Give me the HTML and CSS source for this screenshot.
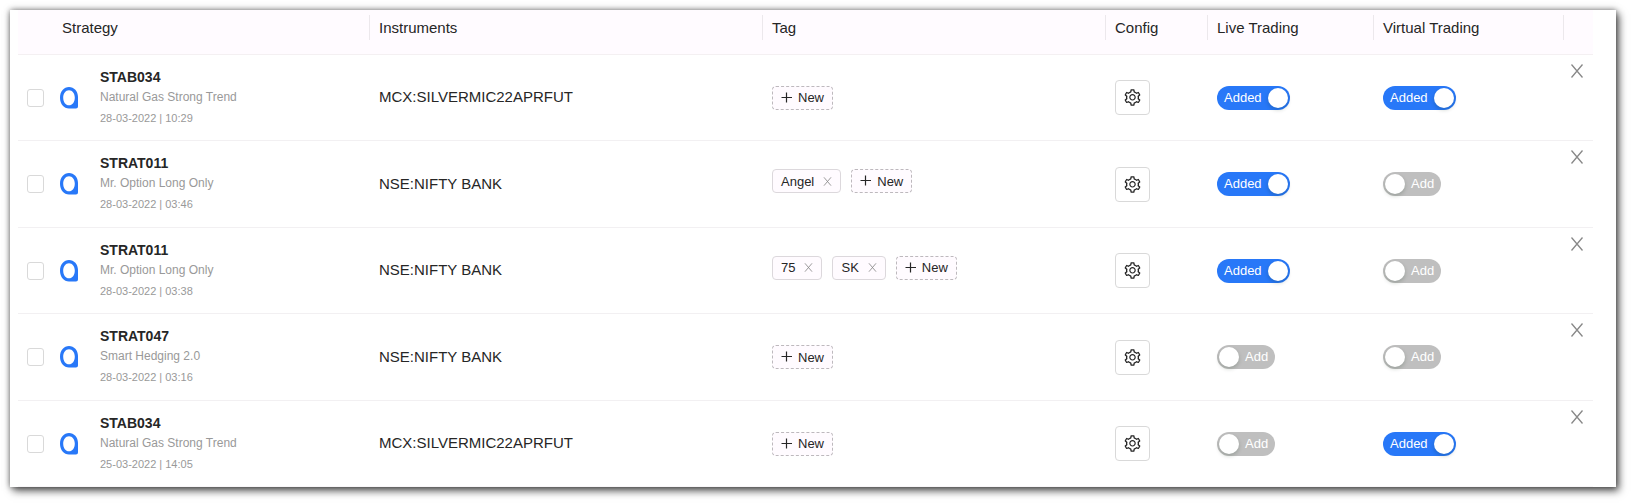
FILE: index.html
```html
<!DOCTYPE html>
<html lang="en">
<head>
<meta charset="utf-8">
<title>Strategies</title>
<link rel="stylesheet" href="styles.css">
</head>
<body>
<svg class="sprite" aria-hidden="true">
  <symbol id="logo" viewBox="0 0 18 22">
    <path fill="#2878f8" fill-rule="evenodd" d="M9 0C14 0 18 4.200 18 10V19.500Q18 21.500 16 21.500H9C4 21.500 0 17 0 10.700S4 0 9 0ZM9 3.200C5.600 3.200 3.200 6.400 3.200 10.700S5.600 18.300 9 18.300S14.800 15 14.800 10.700S12.400 3.200 9 3.200Z"/>
  </symbol>
  <symbol id="cross" viewBox="0 0 12 14">
    <path fill="none" stroke="currentColor" stroke-width="1.300" d="M.500 .500L11.500 13.500M11.500 .500L.500 13.500"/>
  </symbol>
  <symbol id="plus" viewBox="0 0 12 12">
    <path fill="none" stroke="currentColor" stroke-width="1.200" d="M5.500 .500V10.500M.500 5.500H11"/>
  </symbol>
  <symbol id="gear" viewBox="0 0 1024 1024">
    <path fill="currentColor" d="M924.800 625.700l-65.500-56c3.100-19 4.700-38.400 4.700-57.800s-1.600-38.800-4.700-57.800l65.500-56a32.030 32.030 0 0 0 9.300-35.200l-.9-2.600a443.740 443.740 0 0 0-79.700-137.900l-1.800-2.100a32.120 32.120 0 0 0-35.100-9.500l-81.300 28.900c-30-24.600-63.500-44-99.700-57.600l-15.700-85a32.050 32.050 0 0 0-25.800-25.700l-2.700-.5c-52.100-9.400-106.900-9.400-159 0l-2.700.5a32.050 32.050 0 0 0-25.800 25.700l-15.800 85.400a351.860 351.860 0 0 0-99 57.400l-81.900-29.100a32 32 0 0 0-35.100 9.500l-1.800 2.100a446.020 446.020 0 0 0-79.700 137.900l-.9 2.600c-4.500 12.500-.8 26.500 9.300 35.200l66.300 56.600c-3.100 18.800-4.600 38-4.600 57.100 0 19.200 1.500 38.400 4.600 57.100L99 625.500a32.030 32.030 0 0 0-9.300 35.200l.9 2.600c18.100 50.400 44.900 96.900 79.700 137.900l1.800 2.100a32.120 32.120 0 0 0 35.100 9.500l81.900-29.100c29.800 24.500 63.100 43.900 99 57.400l15.800 85.400a32.050 32.050 0 0 0 25.800 25.700l2.700.5a449.400 449.400 0 0 0 159 0l2.700-.5a32.050 32.050 0 0 0 25.800-25.700l15.700-85a350 350 0 0 0 99.700-57.600l81.300 28.900a32 32 0 0 0 35.100-9.500l1.800-2.100c34.800-41.100 61.600-87.500 79.700-137.900l.9-2.600c4.500-12.300.8-26.300-9.300-35zM788.300 465.900c2.500 15.100 3.800 30.600 3.800 46.100s-1.300 31-3.800 46.100l-6.600 40.100 74.700 63.900a370.030 370.030 0 0 1-42.600 73.600L721 702.800l-31.400 25.800c-23.900 19.600-50.500 35-79.300 45.800l-38.100 14.300-17.900 97a377.500 377.500 0 0 1-85 0l-17.900-97.200-37.800-14.500c-28.500-10.800-55-26.200-78.700-45.700l-31.400-25.900-93.400 33.200c-17-22.900-31.200-47.600-42.600-73.600l75.500-64.500-6.500-40c-2.400-14.900-3.700-30.300-3.700-45.500 0-15.300 1.200-30.600 3.700-45.500l6.500-40-75.500-64.500c11.300-26.100 25.600-50.700 42.600-73.600l93.400 33.200 31.400-25.900c23.700-19.500 50.200-34.900 78.700-45.700l37.900-14.300 17.900-97.200c28.100-3.200 56.800-3.200 85 0l17.900 97 38.100 14.300c28.700 10.800 55.400 26.200 79.300 45.800l31.400 25.800 92.800-32.900c17 22.900 31.200 47.600 42.600 73.600L781.800 426l6.500 39.900zM512 326c-97.200 0-176 78.800-176 176s78.800 176 176 176 176-78.800 176-176-78.800-176-176-176zm79.200 255.200A111.600 111.600 0 0 1 512 614c-29.900 0-58-11.700-79.200-32.800A111.600 111.600 0 0 1 400 502c0-29.900 11.700-58 32.800-79.200C454 401.600 482.100 390 512 390c29.900 0 58 11.600 79.200 32.800A111.600 111.600 0 0 1 624 502c0 29.900-11.700 58-32.800 79.200z"/>
  </symbol>
</svg>
<main class="card">
  <table class="strategies">
    <colgroup>
      <col class="col-check"><col class="col-strategy"><col class="col-instrument"><col class="col-tag"><col class="col-config"><col class="col-live"><col class="col-virtual"><col class="col-close">
    </colgroup>
    <thead>
      <tr>
        <th class="plain"></th>
        <th><span>Strategy</span></th>
        <th><span>Instruments</span></th>
        <th><span>Tag</span></th>
        <th><span>Config</span></th>
        <th><span>Live Trading</span></th>
        <th><span>Virtual Trading</span></th>
        <th class="plain"></th>
      </tr>
    </thead>
    <tbody>
      <tr>
        <td><input class="check" type="checkbox" aria-label="Select STAB034"></td>
        <td><div class="strategy"><svg class="logo"><use href="#logo"/></svg><div><div class="name">STAB034</div><div class="desc">Natural Gas Strong Trend</div><div class="date">28-03-2022 | 10:29</div></div></div></td>
        <td class="instrument">MCX:SILVERMIC22APRFUT</td>
        <td><div class="tags"><button class="tag new"><svg class="plus"><use href="#plus"/></svg>New</button></div></td>
        <td><button class="config" aria-label="Configure"><svg class="gear"><use href="#gear"/></svg></button></td>
        <td><label class="switch"><input type="checkbox" role="switch" checked><span>Added</span></label></td>
        <td><label class="switch"><input type="checkbox" role="switch" checked><span>Added</span></label></td>
        <td class="end"><button class="close" aria-label="Remove"><svg><use href="#cross"/></svg></button></td>
      </tr>
      <tr>
        <td><input class="check" type="checkbox" aria-label="Select STRAT011"></td>
        <td><div class="strategy"><svg class="logo"><use href="#logo"/></svg><div><div class="name">STRAT011</div><div class="desc">Mr. Option Long Only</div><div class="date">28-03-2022 | 03:46</div></div></div></td>
        <td class="instrument">NSE:NIFTY BANK</td>
        <td><div class="tags filled"><span class="tag">Angel<button class="untag" aria-label="Remove tag Angel"><svg><use href="#cross"/></svg></button></span><button class="tag new"><svg class="plus"><use href="#plus"/></svg>New</button></div></td>
        <td><button class="config" aria-label="Configure"><svg class="gear"><use href="#gear"/></svg></button></td>
        <td><label class="switch"><input type="checkbox" role="switch" checked><span>Added</span></label></td>
        <td><label class="switch"><input type="checkbox" role="switch"><span>Add</span></label></td>
        <td class="end"><button class="close" aria-label="Remove"><svg><use href="#cross"/></svg></button></td>
      </tr>
      <tr>
        <td><input class="check" type="checkbox" aria-label="Select STRAT011"></td>
        <td><div class="strategy"><svg class="logo"><use href="#logo"/></svg><div><div class="name">STRAT011</div><div class="desc">Mr. Option Long Only</div><div class="date">28-03-2022 | 03:38</div></div></div></td>
        <td class="instrument">NSE:NIFTY BANK</td>
        <td><div class="tags filled"><span class="tag">75<button class="untag" aria-label="Remove tag 75"><svg><use href="#cross"/></svg></button></span><span class="tag">SK<button class="untag" aria-label="Remove tag SK"><svg><use href="#cross"/></svg></button></span><button class="tag new"><svg class="plus"><use href="#plus"/></svg>New</button></div></td>
        <td><button class="config" aria-label="Configure"><svg class="gear"><use href="#gear"/></svg></button></td>
        <td><label class="switch"><input type="checkbox" role="switch" checked><span>Added</span></label></td>
        <td><label class="switch"><input type="checkbox" role="switch"><span>Add</span></label></td>
        <td class="end"><button class="close" aria-label="Remove"><svg><use href="#cross"/></svg></button></td>
      </tr>
      <tr>
        <td><input class="check" type="checkbox" aria-label="Select STRAT047"></td>
        <td><div class="strategy"><svg class="logo"><use href="#logo"/></svg><div><div class="name">STRAT047</div><div class="desc">Smart Hedging 2.0</div><div class="date">28-03-2022 | 03:16</div></div></div></td>
        <td class="instrument">NSE:NIFTY BANK</td>
        <td><div class="tags"><button class="tag new"><svg class="plus"><use href="#plus"/></svg>New</button></div></td>
        <td><button class="config" aria-label="Configure"><svg class="gear"><use href="#gear"/></svg></button></td>
        <td><label class="switch"><input type="checkbox" role="switch"><span>Add</span></label></td>
        <td><label class="switch"><input type="checkbox" role="switch"><span>Add</span></label></td>
        <td class="end"><button class="close" aria-label="Remove"><svg><use href="#cross"/></svg></button></td>
      </tr>
      <tr>
        <td><input class="check" type="checkbox" aria-label="Select STAB034"></td>
        <td><div class="strategy"><svg class="logo"><use href="#logo"/></svg><div><div class="name">STAB034</div><div class="desc">Natural Gas Strong Trend</div><div class="date">25-03-2022 | 14:05</div></div></div></td>
        <td class="instrument">MCX:SILVERMIC22APRFUT</td>
        <td><div class="tags"><button class="tag new"><svg class="plus"><use href="#plus"/></svg>New</button></div></td>
        <td><button class="config" aria-label="Configure"><svg class="gear"><use href="#gear"/></svg></button></td>
        <td><label class="switch"><input type="checkbox" role="switch"><span>Add</span></label></td>
        <td><label class="switch"><input type="checkbox" role="switch" checked><span>Added</span></label></td>
        <td class="end"><button class="close" aria-label="Remove"><svg><use href="#cross"/></svg></button></td>
      </tr>
    </tbody>
  </table>
</main>
</body>
</html>
```

FILE: styles.css
```css
* {
  box-sizing: border-box;
}

body {
  margin: 0;
  padding: 10px 16px 16px 10px;
  background: #fff;
  color: #262626;
  font-family: "Liberation Sans", Arial, sans-serif;
  font-size: 15px;
}

button {
  font: inherit;
  color: inherit;
  cursor: pointer;
}

svg {
  display: block;
}

.sprite {
  display: none;
}

.card {
  padding: 0 23px 0 8px;
  background: #fff;
  box-shadow: 3px 4px 8px rgba(0, 0, 0, 0.6), 0 0 6px rgba(0, 0, 0, 0.5);
}

.strategies {
  width: 100%;
  table-layout: fixed;
  border-collapse: separate;
  border-spacing: 0;
}

.col-check { width: 35px; }
.col-strategy { width: 317px; }
.col-instrument { width: 393px; }
.col-config { width: 102px; }
.col-live { width: 166px; }
.col-virtual { width: 190px; }
.col-close { width: 29px; }

th {
  height: 45px;
  padding: 5px 0 14px;
  background: #fffbff;
  border-bottom: 1px solid #f4f0f2;
  font-weight: 400;
  text-align: left;
  line-height: 25px;
}

th span {
  display: block;
  padding-left: 9px;
  border-right: 1px solid #ece8ec;
}

td {
  height: 86px;
  padding: 0 0 0 9px;
  border-bottom: 1px solid #f2f0f2;
  vertical-align: middle;
}

tbody tr:nth-child(even) td {
  height: 87px;
}

tbody tr:last-child td {
  border-bottom-color: #f8f6f8;
}

td.instrument {
  padding-bottom: 2px;
}

.check {
  display: block;
  appearance: none;
  width: 17px;
  height: 18px;
  margin: 0;
  border: 1px solid #d9d9d9;
  border-radius: 3px;
  background: #fff;
}

.check:checked {
  background: #2878f8;
}

.strategy {
  display: flex;
  align-items: center;
  gap: 22px;
}

.logo {
  width: 18px;
  height: 22px;
  margin-left: -2px;
}

.name {
  font-size: 14px;
  font-weight: 700;
  line-height: 20px;
}

.desc {
  color: #999;
  font-size: 12px;
  line-height: 20px;
}

.date {
  color: #999;
  font-size: 11px;
  line-height: 22px;
}

.tags {
  display: flex;
  gap: 10px;
}

.tags.filled {
  padding-bottom: 6px;
}

.tag {
  display: inline-flex;
  align-items: center;
  height: 24px;
  padding: 0 8px;
  border: 1px solid #dcd8dc;
  border-radius: 4px;
  background: #fffbff;
  font-size: 13px;
}

.tag.new {
  gap: 5px;
  border: 1px dashed #bdb9bd;
}

.plus {
  width: 12px;
  height: 12px;
}

.untag {
  margin-left: 9px;
  padding: 0;
  border: 0;
  background: none;
  color: #888;
}

.untag svg {
  width: 9px;
  height: 9px;
}

.config {
  display: flex;
  align-items: center;
  justify-content: center;
  width: 35px;
  height: 35px;
  padding: 0;
  border: 1px solid #d9d9d9;
  border-radius: 4px;
  background: #fff;
}

.gear {
  width: 19px;
  height: 19px;
}

.switch {
  display: inline-flex;
  flex-direction: row-reverse;
  align-items: center;
  gap: 6px;
  height: 24px;
  padding: 0 7px 0 2px;
  border-radius: 12px;
  background: #bfbfbf;
  color: #fff;
  font-size: 13px;
  line-height: 24px;
  vertical-align: middle;
  cursor: pointer;
}

.switch input {
  order: 1;
  appearance: none;
  width: 20px;
  height: 20px;
  margin: 0;
  border-radius: 50%;
  background: #fff;
  box-shadow: 0 2px 4px rgba(0, 35, 11, 0.2);
}

.switch:has(input:checked) {
  flex-direction: row;
  padding: 0 2px 0 7px;
  background: #2878f8;
}

td.end {
  padding: 9px 10px 0 0;
  vertical-align: top;
}

.close {
  display: block;
  margin-left: auto;
  padding: 0;
  border: 0;
  background: none;
  color: #888;
}

.close svg {
  width: 12px;
  height: 14px;
}
```
